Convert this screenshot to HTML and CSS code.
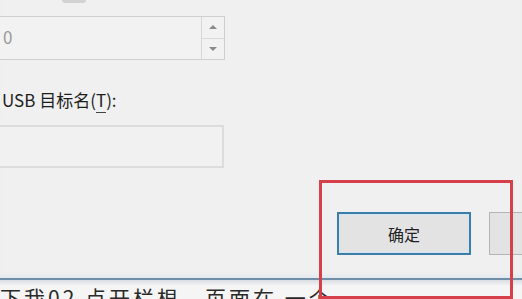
FILE: index.html
```html
<!DOCTYPE html>
<html lang="zh-CN">
<head>
    <meta charset="UTF-8">
    <title>USB 属性</title>
    <link rel="stylesheet" href="styles.css">
</head>
<body>
    <div class="dialog">
        <div class="top-ghost"></div>

        <!-- number field with spin buttons -->
        <div class="spin">
            <span class="spin-value">0</span>
            <div class="spin-btns">
                <span class="spin-up"></span>
                <span class="spin-down"></span>
            </div>
        </div>

        <label class="field-label">USB 目标名(<u>T</u>):</label>
        <div class="textbox"></div>

        <!-- dialog buttons -->
        <div class="actions">
            <button class="btn btn-default">确定</button>
            <button class="btn"></button>
        </div>

        <div class="mark"></div>
    </div>

    <div class="page-below">
        <p>下我02 点开栏根，页面在 一个</p>
    </div>
</body>
</html>
```

FILE: styles.css
```css
body {
    margin: 0;
    padding: 0;
    width: 522px;
    height: 299px;
    overflow: hidden;
    background-color: #f0f0f0;
    font-family: "Microsoft YaHei", "Noto Sans CJK SC", "Noto Sans", sans-serif;
    color: #222;
}
.dialog {
    position: relative;
    height: 280px;
    box-sizing: border-box;
    padding-top: 16px;
    background-color: #f0f0f0;
    border-bottom: 2px solid #6f8ea8;
    box-shadow: 0 -4px 4px -2px #dfe7ee inset;
}
.top-ghost {
    position: absolute;
    left: 62px;
    top: 0;
    width: 24px;
    height: 3px;
    background-color: #d2d2d2;
    border-radius: 0 0 3px 3px;
}
.spin {
    display: flex;
    width: 225px;
    height: 44px;
    box-sizing: border-box;
    border: 1px solid #cfcfcf;
    border-left: none;
    background-color: #f2f2f2;
}
.spin-value {
    flex: 1;
    padding-left: 3px;
    font-size: 17px;
    line-height: 40px;
    color: #9a9a9a;
}
.spin-btns {
    display: flex;
    flex-direction: column;
    width: 22px;
    border-left: 1px solid #d6d6d6;
}
.spin-btns span {
    flex: 1;
    display: flex;
    align-items: center;
    justify-content: center;
}
.spin-up {
    border-bottom: 1px solid #dadada;
}
.spin-up::after {
    content: "";
    border-left: 4px solid transparent;
    border-right: 4px solid transparent;
    border-bottom: 4px solid #8a8a8a;
}
.spin-down::after {
    content: "";
    border-left: 4px solid transparent;
    border-right: 4px solid transparent;
    border-top: 4px solid #8a8a8a;
}
.field-label {
    display: block;
    margin-top: 30px;
    padding-left: 2px;
    font-size: 17px;
    line-height: 20px;
    color: #1e1e1e;
}
.field-label u {
    text-decoration: none;
    border: 1px solid #444;
    border-width: 0 0 1px 0;
}
.textbox {
    width: 224px;
    height: 43px;
    margin-top: 15px;
    box-sizing: border-box;
    border: 2px solid #dcdcdc;
    border-left: none;
    background-color: #f1f1f1;
}
.actions {
    display: flex;
    gap: 18px;
    margin-top: 44px;
    padding-left: 337px;
}
.btn {
    flex: none;
    width: 134px;
    height: 43px;
    box-sizing: border-box;
    border: 1px solid #b4b4b4;
    background-color: #e3e3e3;
    font-family: inherit;
    font-size: 16px;
    color: #222;
}
.btn-default {
    border: 2px solid #3d7ea6;
    box-shadow: inset 0 0 0 1px #cde6f7;
}
.mark {
    position: absolute;
    left: 319px;
    top: 180px;
    width: 194px;
    height: 119px;
    box-sizing: border-box;
    border: 3px solid #d6404b;
    z-index: 2;
}
.page-below {
    background: linear-gradient(#d9dde2, #f5f5f5 6px);
    height: 19px;
    overflow: hidden;
}
.page-below p {
    margin: 0;
    padding-top: 7px;
    font-size: 21px;
    line-height: 21px;
    color: #2a2a2a;
    white-space: nowrap;
    letter-spacing: 3px;
}
```
